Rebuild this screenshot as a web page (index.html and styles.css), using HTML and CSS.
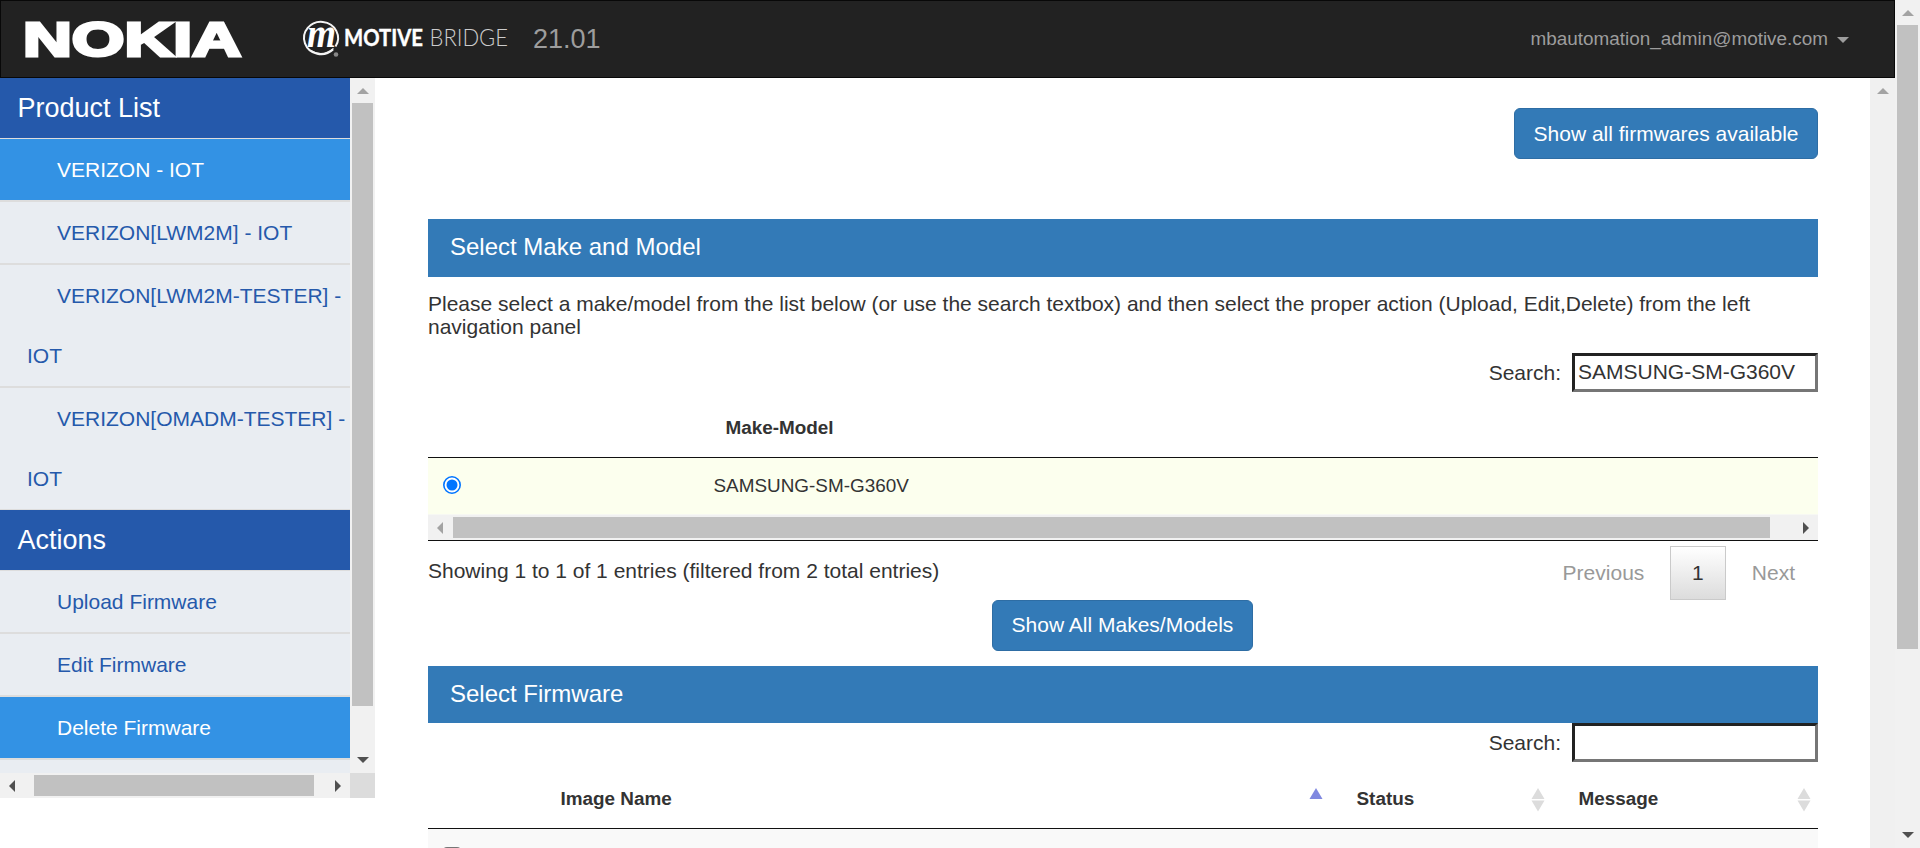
FILE: index.html
```html
<!DOCTYPE html>
<html lang="en">
<head>
<meta charset="utf-8">
<title>Motive Bridge</title>
<link rel="stylesheet" href="styles.css">
</head>
<body>
<div class="app">
  <div class="page">
    <header class="navbar">
      <svg class="nokia" width="217" height="40" viewBox="0 0 217 40">
        <text x="-3" y="36" textLength="218" lengthAdjust="spacingAndGlyphs">NOKIA</text>
      </svg>
      <svg class="motive" width="210" height="40" viewBox="0 0 210 40">
        <path d="M33.500 26.500A17 16.200 0 1 0 31 29.500" fill="none" stroke="#f4f4f4" stroke-width="2"/>
        <path d="M9 30.500Q20 38 31.500 28.500" fill="none" stroke="#f4f4f4" stroke-width="1.500"/>
        <text class="m-mark" x="5" y="26.500" textLength="29" lengthAdjust="spacingAndGlyphs">m</text>
        <circle cx="34" cy="34.500" r="2.300" fill="#888"/>
        <text class="m-bold" x="42" y="26" textLength="79" lengthAdjust="spacingAndGlyphs">MOTIVE</text>
        <text class="m-thin" x="127.500" y="26" textLength="78.500" lengthAdjust="spacingAndGlyphs">BRIDGE</text>
      </svg>
      <span class="version">21.01</span>
      <div class="user">mbautomation_admin@motive.com<span class="caret"></span></div>
    </header>
    <div class="body">
      <aside class="sidebar">
        <div class="sidebar-top">
          <nav class="menu">
            <div class="menu-head">Product List</div>
            <div class="item active">VERIZON - IOT</div>
            <div class="item">VERIZON[LWM2M] - IOT</div>
            <div class="item tall">VERIZON[LWM2M-TESTER] -<br>IOT</div>
            <div class="item tall last">VERIZON[OMADM-TESTER] -<br>IOT</div>
            <div class="menu-head">Actions</div>
            <div class="item">Upload Firmware</div>
            <div class="item">Edit Firmware</div>
            <div class="item active">Delete Firmware</div>
          </nav>
          <div class="vbar">
            <svg class="arrow-up" width="12" height="6"><path d="M6 0L12 6H0z" fill="#a3a3a3"/></svg>
            <div class="thumb side-thumb"></div>
            <svg class="arrow-down" width="12" height="6"><path d="M0 0H12L6 6z" fill="#505050"/></svg>
          </div>
        </div>
        <div class="sidebar-bottom">
          <div class="hbar side-h">
            <svg width="6" height="12"><path d="M6 0V12L0 6z" fill="#505050"/></svg>
            <div class="thumb"></div>
            <svg width="6" height="12"><path d="M0 0V12L6 6z" fill="#505050"/></svg>
          </div>
          <div class="corner"></div>
        </div>
      </aside>
      <main class="main">
        <div class="toolbar"><button class="btn btn-top">Show all firmwares available</button></div>
        <h2 class="panel-head">Select Make and Model</h2>
        <p class="intro">Please select a make/model from the list below (or use the search textbox) and then select the proper action (Upload, Edit,Delete) from the left<br>navigation panel</p>
        <div class="search"><label for="s1">Search:</label><input id="s1" type="text" value="SAMSUNG-SM-G360V"></div>
        <div class="model-head">Make-Model</div>
        <div class="model-row">
          <svg class="radio" width="18" height="18"><circle cx="9" cy="9" r="8.200" fill="#fff" stroke="#0075ff" stroke-width="1.600"/><circle cx="9" cy="9" r="5.500" fill="#0075ff"/></svg>
          <span>SAMSUNG-SM-G360V</span>
        </div>
        <div class="hbar table-h">
          <svg width="6" height="12"><path d="M6 0V12L0 6z" fill="#a3a3a3"/></svg>
          <div class="thumb"></div>
          <svg width="6" height="12"><path d="M0 0V12L6 6z" fill="#505050"/></svg>
        </div>
        <div class="table-foot">
          <span class="info">Showing 1 to 1 of 1 entries (filtered from 2 total entries)</span>
          <div class="pager"><span>Previous</span><span class="current">1</span><span>Next</span></div>
        </div>
        <div class="center"><button class="btn">Show All Makes/Models</button></div>
        <h2 class="panel-head second">Select Firmware</h2>
        <div class="search"><label for="s2">Search:</label><input id="s2" type="text"></div>
        <div class="fw-head">
          <div class="col-name">Image Name<svg width="14" height="24"><path d="M7 0L13.500 11H.5z" fill="#8088e0"/></svg></div>
          <div class="col-status">Status<svg width="14" height="24"><path d="M7 0L13.500 11H.5zM.5 12.500H13.500L7 23.500z" fill="#dcdcdc"/></svg></div>
          <div class="col-message">Message<svg width="14" height="24"><path d="M7 0L13.500 11H.5zM.5 12.500H13.500L7 23.500z" fill="#dcdcdc"/></svg></div>
        </div>
        <div class="fw-row"><span class="check"></span></div>
      </main>
      <div class="main-bar"><svg width="12" height="6"><path d="M6 0L12 6H0z" fill="#a3a3a3"/></svg></div>
    </div>
  </div>
  <div class="page-bar">
    <svg class="arrow-up" width="12" height="6"><path d="M6 0L12 6H0z" fill="#a3a3a3"/></svg>
    <div class="thumb page-thumb"></div>
    <svg class="arrow-down" width="12" height="6"><path d="M0 0H12L6 6z" fill="#505050"/></svg>
  </div>
</div>
</body>
</html>
```
FILE: styles.css
```css
* { box-sizing: border-box; }
html, body { margin: 0; height: 848px; overflow: hidden; background: #fff; }
body { font: 21px/23px "Liberation Sans", Arial, sans-serif; color: #333; }
svg { display: block; flex: none; }
.app { display: flex; width: 1920px; height: 848px; }
.page { width: 1895px; display: flex; flex-direction: column; }

.navbar { height: 78px; flex: none; display: flex; align-items: flex-start; background: #222; border: 1px solid #080808; padding-left: 25px; color: #9d9d9d; }
.nokia { margin-top: 19px; overflow: visible; }
.nokia text { font: bold 48px "Liberation Sans", Arial, sans-serif; fill: #fff; stroke: #fff; stroke-width: 3px; }
.motive { margin: 19px 0 0 59px; overflow: visible; }
.m-mark { font: italic bold 40px "Liberation Serif", serif; fill: #fff; }
.m-bold { font: bold 23.5px Lato, sans-serif; fill: #fff; stroke: #fff; stroke-width: .4px; }
.m-thin { font: 300 23.5px Lato, sans-serif; fill: #ccc; }
.version { font-size: 27px; line-height: 30px; margin: 23px 0 0 21px; }
.user { margin: 26px 45px 0 auto; font-size: 18.9px; line-height: 24px; display: flex; align-items: center; gap: 9px; }
.caret { border: 6px solid transparent; border-top-color: #9d9d9d; border-bottom: 0; margin-top: 2px; }

.body { display: flex; flex: 1; min-height: 0; }
.sidebar { width: 375px; height: 720px; flex: none; }
.sidebar-top { display: flex; height: 695px; }
.menu { width: 350px; background: #e9edf2; overflow: hidden; }
.menu-head { height: 61px; border-bottom: 1px solid #ddd; background: #2559ab; color: #fff; font-size: 27px; line-height: 61px; padding-left: 17.5px; }
.item { height: 63px; border-bottom: 2px solid #ddd; color: #2559ab; line-height: 60px; padding: 1px 0 0 27px; text-indent: 30px; white-space: nowrap; }
.tall { height: 123px; }
.last { height: 122px; border-bottom-width: 1px; }
.item.active { background: #3392e4; color: #fff; }
.vbar { width: 25px; background: #f1f1f1; display: flex; flex-direction: column; align-items: center; }
.thumb { background: #c1c1c1; }
.arrow-up { margin: 10px 0 9px; }
.arrow-down { margin-top: auto; margin-bottom: 10px; }
.side-thumb { width: 21px; height: 603px; }
.sidebar-bottom { display: flex; }
.hbar { height: 25px; background: #f1f1f1; display: flex; align-items: center; justify-content: space-between; }
.hbar .thumb { height: 21px; }
.side-h { width: 350px; padding: 0 9px; }
.side-h .thumb { width: 280px; margin: 0 auto 0 19px; }
.corner { width: 25px; height: 25px; background: #dcdcdc; }

.main { flex: 1; min-width: 0; padding: 30px 52px 0 53px; overflow: hidden; }
.toolbar { display: flex; justify-content: flex-end; height: 111px; }
.btn { height: 51px; border: 1px solid #2e6da4; border-radius: 6px; background: #337ab7; color: #fff; font: 21px/30px "Liberation Sans", Arial, sans-serif; padding: 0 18.5px 1px; }
.btn-top { padding: 1px 18.5px 0; }
.panel-head { height: 58px; margin: 0; background: #337ab7; color: #fff; font-size: 24px; font-weight: 400; line-height: 55px; padding-left: 22px; }
.second { height: 57px; line-height: 55px; }
.intro { margin: 15px 0 0; height: 61px; white-space: nowrap; letter-spacing: -.003px; }
.search { display: flex; justify-content: flex-end; align-items: center; gap: 11px; height: 39px; }
.search input { width: 246px; height: 39px; border: 3px solid; border-color: #222 #767676 #767676 #222; padding: 0 3px 2px; font: 21px "Liberation Sans", Arial, sans-serif; color: #333; background: #fff; border-radius: 0; }
.model-head { height: 66px; border-bottom: 1px solid #111; font-size: 18.9px; font-weight: 700; line-height: 72px; padding-left: 297.5px; }
.model-row { height: 57px; background: #fcffee; border-bottom: 1px solid #f7f8f3; display: flex; align-items: center; font-size: 18.9px; padding: 0 0 2px 15px; }
.model-row span { margin-left: 252.5px; }
.table-h { padding: 0 9px; height: 26px; border-bottom: 1px solid #111; }
.table-h .thumb { width: 1317px; margin: 0 auto 0 10px; }
.table-foot { display: flex; justify-content: space-between; height: 59px; }
.info { padding-top: 18px; }
.pager { display: flex; padding: 5px 23px 0 0; height: 59px; line-height: 54px; color: #999; }
.pager .current { width: 56px; height: 54px; line-height: 52px; margin: 0 26px 0 25.5px; text-align: center; border: 1px solid #cacaca; color: #333; background: linear-gradient(#fff, #dcdcdc); }
.center { display: flex; justify-content: center; height: 66px; padding-right: 1px; }
.fw-head { display: flex; height: 67px; border-bottom: 1px solid #111; font-size: 18.9px; font-weight: 700; line-height: 73px; }
.fw-head > div { display: flex; justify-content: space-between; padding-right: 7.500px; }
.fw-head svg { margin-top: 26px; }
.col-name { width: 902px; padding-left: 132.5px; }
.col-status { width: 222px; padding-left: 26.5px; }
.col-message { width: 266px; padding-left: 26.5px; }
.fw-row { height: 60px; background: #f9f9f9; padding: 18px 0 0 15px; }
.check { display: block; width: 18px; height: 18px; border: 2px solid #767676; border-radius: 4px; background: #fff; }
.main-bar { width: 25px; background: #f0f0f0; padding: 10px 0 0 7px; }
.page-bar { width: 25px; background: #f1f1f1; display: flex; flex-direction: column; align-items: center; }
.page-thumb { width: 21px; height: 624px; }
```
